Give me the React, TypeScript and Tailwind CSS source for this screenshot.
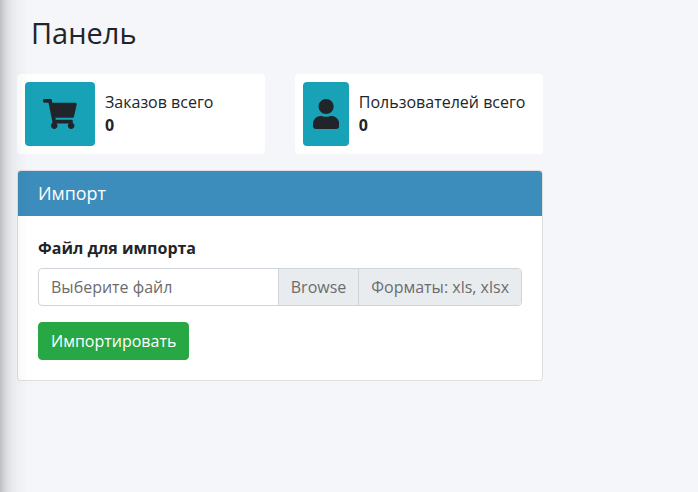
import type { ReactNode } from "react";
import { FaShoppingCart, FaUser } from "react-icons/fa";

function InfoBox({ icon, label, value }: { icon: ReactNode; label: string; value: string }) {
  return (
    <div className="flex h-20 w-[248px] rounded bg-white p-2">
      <span className="flex w-[70px] items-center justify-center rounded bg-[#17a2b8] text-[30px]">
        {icon}
      </span>
      <div className="flex flex-none flex-col justify-center pl-2.5 pr-[9.5px] leading-[23px]">
        <span className="whitespace-nowrap">{label}</span>
        <span className="font-bold">{value}</span>
      </div>
    </div>
  );
}

export default function App() {
  return (
    <div className="relative h-[492px] w-[698px] overflow-hidden bg-[#f4f6f9] font-['Open_Sans',sans-serif] text-base text-[#212529]">
      <main className="w-[543px] pl-[17px]">
        <h1 className="pt-[15px] pl-3.5 text-[29px] leading-[35px]">Панель</h1>
        <div className="mt-6 flex justify-between">
          <InfoBox icon={<FaShoppingCart className="h-[30px] w-[33.75px] shrink-0" />} label="Заказов всего" value="0" />
          <InfoBox icon={<FaUser className="h-[30px] w-[26.25px] shrink-0" />} label="Пользователей всего" value="0" />
        </div>
        <section className="mt-4 h-[211px] overflow-hidden rounded border border-black/[0.125] bg-white">
          <h3 className="h-[45px] bg-[#3c8dbc] px-5 text-[17.9px] leading-[45px] text-white">Импорт</h3>
          <div className="p-5">
            <label className="mb-2 block font-bold leading-6">Файл для импорта</label>
            <div className="flex h-[38px] overflow-hidden rounded border border-[#ced4da] leading-9 text-[#6c6c6c]">
              <span className="flex-1 px-3">Выберите файл</span>
              <span className="border-l border-[#ced4da] bg-[#e9ecef] px-3">Browse</span>
              <span className="border-l border-[#ced4da] bg-[#e9ecef] px-3">Форматы: xls, xlsx</span>
            </div>
            <button className="mt-4 h-[38px] rounded border border-[#28a745] bg-[#28a745] px-3 leading-6 text-white">
              Импортировать
            </button>
          </div>
        </section>
      </main>
      <div className="pointer-events-none absolute -top-20 -bottom-20 -left-[250px] w-[250px] shadow-[0_14px_28px_rgba(0,0,0,0.25),0_10px_10px_rgba(0,0,0,0.22)]" />
    </div>
  );
}
